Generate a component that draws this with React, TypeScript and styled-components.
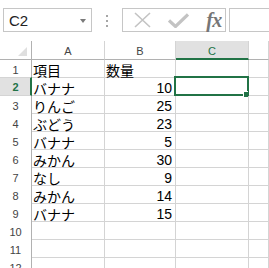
import React from "react";
import styled, { createGlobalStyle, css } from "styled-components";

const Global = createGlobalStyle`
  html, body { margin: 0; padding: 0; background: #ffffff; overflow: hidden; }
  body { width: 269px; height: 268px; }
`;

const GREEN = "#217346";
const GRID = "#d4d4d4";
const HEADER_LINE = "#b1b1b1";

const Page = styled.div`
  width: 269px;
  height: 268px;
  overflow: hidden;
  background: #fff;
  font-family: "Liberation Sans", Arial, sans-serif;
`;

const Toolbar = styled.div`
  display: flex;
  align-items: flex-start;
  height: 41px;
  padding: 8px 0 0 3px;
  box-sizing: border-box;
`;

const NameBox = styled.div`
  display: flex;
  align-items: center;
  justify-content: space-between;
  width: 102px;
  height: 24px;
  box-sizing: border-box;
  border: 1px solid #c6c6c6;
  padding: 0 5px 0 5px;
  font-family: "Liberation Sans", Arial, sans-serif;
  font-size: 15px;
  color: #222;
`;

const DropArrow = styled.span`
  width: 0;
  height: 0;
  border-left: 3.5px solid transparent;
  border-right: 3.5px solid transparent;
  border-top: 4px solid #7a7a7a;
  margin-top: 1px;
`;

const Dots = styled.div`
  display: flex;
  flex-direction: column;
  gap: 3px;
  margin: 7px 0 0 14px;
  width: 3px;
`;

const Dot = styled.span`
  width: 2px;
  height: 2px;
  background: #a6a6a6;
`;

const ButtonsBox = styled.div`
  display: flex;
  align-items: center;
  width: 110px;
  height: 24px;
  box-sizing: border-box;
  border: 1px solid #c6c6c6;
  margin-left: 13px;
  padding-left: 8px;
  gap: 0;
`;

const IconSlot = styled.div<{ $w: number }>`
  display: flex;
  align-items: center;
  justify-content: center;
  width: ${(p) => p.$w}px;
  height: 22px;
`;

const Fx = styled.span`
  font-family: "Liberation Serif", "Times New Roman", serif;
  font-style: italic;
  font-weight: bold;
  font-size: 20px;
  color: #767676;
  letter-spacing: -0.5px;
  line-height: 22px;
`;

const FormulaBox = styled.div`
  flex: 1;
  min-width: 40px;
  height: 24px;
  box-sizing: border-box;
  border: 1px solid #c6c6c6;
  border-right: none;
  margin-left: 3px;
`;

const Sheet = styled.div`
  display: grid;
  grid-template-columns: 32px 73px 71px 73px 1fr;
  grid-template-rows: 19px repeat(12, 18px);
`;

const Corner = styled.div`
  position: relative;
  box-sizing: border-box;
  border-right: 1px solid ${HEADER_LINE};
  border-bottom: 1px solid ${HEADER_LINE};
`;

const CornerTri = styled.span`
  position: absolute;
  right: 4px;
  bottom: 3px;
  width: 0;
  height: 0;
  border-left: 9px solid transparent;
  border-bottom: 9px solid #dfdfdf;
`;

const ColHead = styled.div<{ $active?: boolean }>`
  display: flex;
  align-items: center;
  justify-content: center;
  box-sizing: border-box;
  border-right: 1px solid ${GRID};
  border-bottom: 1px solid ${HEADER_LINE};
  font-family: "Liberation Sans", Arial, sans-serif;
  font-size: 11px;
  color: #444;
  padding-top: 1px;
  ${(p) =>
    p.$active &&
    css`
      background: #e1e1e1;
      color: ${GREEN};
      border-bottom: 2px solid ${GREEN};
      padding-top: 2px;
    `}
`;

const RowHead = styled.div<{ $active?: boolean }>`
  display: flex;
  align-items: center;
  justify-content: center;
  box-sizing: border-box;
  border-right: 1px solid ${HEADER_LINE};
  font-family: "Liberation Sans", Arial, sans-serif;
  font-size: 11px;
  color: #444;
  padding-top: 1px;
  ${(p) =>
    p.$active &&
    css`
      background: #e1e1e1;
      color: ${GREEN};
      font-weight: bold;
      border-right: 2px solid ${GREEN};
      border-top: 1px solid ${GRID};
      border-bottom: 1px solid ${GRID};
      margin-top: -1px;
      height: 19px;
      padding-left: 1px;
    `}
`;

const Cell = styled.div<{ $num?: boolean }>`
  position: relative;
  box-sizing: border-box;
  border-right: 1px solid ${GRID};
  border-bottom: 1px solid ${GRID};
  padding: 2px 3px 0 1px;
  white-space: nowrap;
  line-height: 17px;
  font-size: 14px;
  color: #000;
  font-family: ${(p) =>
    p.$num
      ? `"Liberation Sans", Arial, sans-serif`
      : `"Noto Sans CJK JP", "Liberation Sans", sans-serif`};
  text-align: ${(p) => (p.$num ? "right" : "left")};
`;

const Selection = styled.div`
  position: absolute;
  left: -2px;
  top: -2px;
  right: -1px;
  bottom: -1px;
  border: 2px solid ${GREEN};
  pointer-events: none;
`;

const Handle = styled.span`
  position: absolute;
  right: -2px;
  bottom: -3px;
  width: 5px;
  height: 5px;
  background: ${GREEN};
  box-shadow: -1px -1px 0 #fff;
`;

const data: [string, string][] = [
  ["項目", "数量"],
  ["バナナ", "10"],
  ["りんご", "25"],
  ["ぶどう", "23"],
  ["バナナ", "5"],
  ["みかん", "30"],
  ["なし", "9"],
  ["みかん", "14"],
  ["バナナ", "15"],
  ["", ""],
  ["", ""],
  ["", ""],
];

const CrossIcon = () => (
  <svg width="19" height="16" viewBox="0 0 19 16">
    <path d="M2 1 L17 15 M17 1 L2 15" stroke="#c3c3c3" strokeWidth="1.6" fill="none" />
  </svg>
);

const CheckIcon = () => (
  <svg width="21" height="15" viewBox="0 0 21 15">
    <path d="M1 7.5 L7.5 13.5 L20 1.5" stroke="#c3c3c3" strokeWidth="3.2" fill="none" />
  </svg>
);

export default function App() {
  return (
    <Page>
      <Global />
      <Toolbar>
        <NameBox>
          <span>C2</span>
          <DropArrow />
        </NameBox>
        <Dots>
          <Dot />
          <Dot />
          <Dot />
        </Dots>
        <ButtonsBox>
          <IconSlot $w={22}>
            <CrossIcon />
          </IconSlot>
          <IconSlot $w={14} />
          <IconSlot $w={22}>
            <CheckIcon />
          </IconSlot>
          <IconSlot $w={14} />
          <IconSlot $w={22}>
            <Fx>fx</Fx>
          </IconSlot>
        </ButtonsBox>
        <FormulaBox />
      </Toolbar>
      <Sheet>
        <Corner>
          <CornerTri />
        </Corner>
        <ColHead>A</ColHead>
        <ColHead>B</ColHead>
        <ColHead $active>C</ColHead>
        <ColHead />
        {data.map(([a, b], i) => {
          const row = i + 1;
          const active = row === 2;
          const isNum = row > 1;
          return (
            <React.Fragment key={row}>
              <RowHead $active={active}>{row}</RowHead>
              <Cell>{a}</Cell>
              <Cell $num={isNum} style={isNum ? undefined : { textAlign: "left" }}>
                {b}
              </Cell>
              <Cell>
                {active && (
                  <Selection>
                    <Handle />
                  </Selection>
                )}
              </Cell>
              <Cell />
            </React.Fragment>
          );
        })}
      </Sheet>
    </Page>
  );
}
